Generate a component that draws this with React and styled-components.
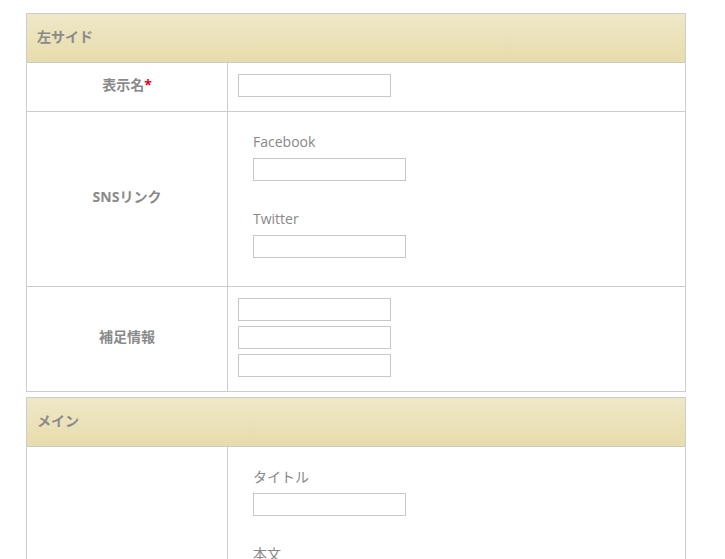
import React from "react";
import styled, { createGlobalStyle } from "styled-components";

const GlobalStyle = createGlobalStyle`
  html, body {
    margin: 0;
    padding: 0;
    background: #ffffff;
  }
  body {
    font-family: "Open Sans", "Noto Sans CJK JP", sans-serif;
    font-size: 14px;
    color: #888888;
  }
  * { box-sizing: border-box; }
`;

const Page = styled.div`
  padding: 13px 0 0 26px;
`;

const Panel = styled.section`
  width: 660px;
  border: 1px solid #cccccc;
  margin-bottom: 5px;
  background: #ffffff;
`;

const PanelHeader = styled.div`
  height: 49px;
  display: flex;
  align-items: center;
  padding: 0 10px 4px;
  background: linear-gradient(to bottom, #efe8c8 0%, #e7dcab 100%);
  border-bottom: 1px solid #cccccc;
  font-family: "Noto Sans CJK JP", sans-serif;
  font-weight: bold;
  font-size: 14px;
  line-height: 20px;
  color: #8a8a8a;
`;

const Row = styled.div`
  display: grid;
  grid-template-columns: 201px 1fr;
  & + & {
    border-top: 1px solid #cccccc;
  }
`;

const LabelCell = styled.div`
  border-right: 1px solid #cccccc;
  display: flex;
  align-items: center;
  justify-content: center;
  padding: 8px 10px 12px;
  font-family: "Open Sans", "Noto Sans CJK JP", sans-serif;
  font-weight: bold;
  font-size: 14px;
  line-height: 20px;
  color: #8a8a8a;
`;

const Required = styled.span`
  color: #e60012;
`;

const FieldCell = styled.div`
  padding: 11px 10px 14px;
  display: flex;
  flex-direction: column;
  align-items: flex-start;
  gap: 5px;
`;

const TextInput = styled.input`
  display: block;
  width: 153px;
  height: 23px;
  margin: 0;
  padding: 2px 4px;
  border: 1px solid #c8c8c8;
  border-radius: 0;
  background: #ffffff;
  font-family: "Open Sans", sans-serif;
  font-size: 13px;
  outline: none;
`;

const TextArea = styled.textarea`
  display: block;
  width: 420px;
  height: 160px;
  margin: 0;
  padding: 4px;
  border: 1px solid #c8c8c8;
  border-radius: 0;
  resize: none;
  font-family: "Open Sans", sans-serif;
  font-size: 13px;
  outline: none;
`;

const FieldGroup = styled.div`
  padding: 9px 15px 14px;
  display: flex;
  flex-direction: column;
  gap: 28px;
`;

const Field = styled.div`
  display: flex;
  flex-direction: column;
  align-items: flex-start;
  gap: 6px;
`;

const FieldLabel = styled.label`
  display: block;
  font-family: "Open Sans", "Noto Sans CJK JP", sans-serif;
  font-size: 14px;
  line-height: 20px;
  color: #888888;
`;

export default function App() {
  return (
    <>
      <GlobalStyle />
      <Page>
        <Panel>
          <PanelHeader>左サイド</PanelHeader>
          <Row>
            <LabelCell>
              表示名<Required>*</Required>
            </LabelCell>
            <FieldCell>
              <TextInput type="text" />
            </FieldCell>
          </Row>
          <Row>
            <LabelCell>SNSリンク</LabelCell>
            <FieldCell>
              <FieldGroup>
                <Field>
                  <FieldLabel>Facebook</FieldLabel>
                  <TextInput type="text" />
                </Field>
                <Field>
                  <FieldLabel>Twitter</FieldLabel>
                  <TextInput type="text" />
                </Field>
              </FieldGroup>
            </FieldCell>
          </Row>
          <Row>
            <LabelCell>補足情報</LabelCell>
            <FieldCell>
              <TextInput type="text" />
              <TextInput type="text" />
              <TextInput type="text" />
            </FieldCell>
          </Row>
        </Panel>
        <Panel>
          <PanelHeader>メイン</PanelHeader>
          <Row>
            <LabelCell />
            <FieldCell>
              <FieldGroup>
                <Field>
                  <FieldLabel>タイトル</FieldLabel>
                  <TextInput type="text" />
                </Field>
                <Field>
                  <FieldLabel>本文</FieldLabel>
                  <TextArea />
                </Field>
              </FieldGroup>
            </FieldCell>
          </Row>
        </Panel>
      </Page>
    </>
  );
}
